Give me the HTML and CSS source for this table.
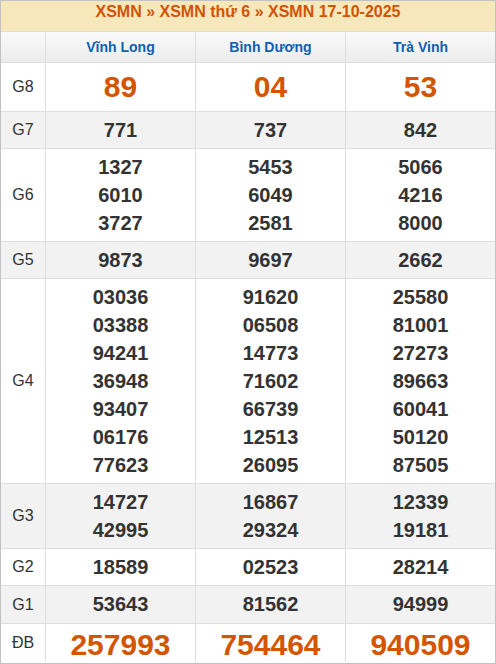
FILE: index.html
```html
<!DOCTYPE html>
<html lang="vi">
<head>
<meta charset="utf-8">
<title>XSMN 17-10-2025</title>
<link rel="stylesheet" href="styles.css">
</head>
<body>
<div class="box">
  <div class="title"><span>XSMN</span> » <span>XSMN thứ 6</span> » <span>XSMN 17-10-2025</span></div>
  <div class="grid">
    <div class="row head">
      <div class="lbl"></div>
      <div class="prov">Vĩnh Long</div>
      <div class="prov">Bình Dương</div>
      <div class="prov">Trà Vinh</div>
    </div>
    <div class="row g8">
      <div class="lbl">G8</div>
      <div class="cell"><span>89</span></div>
      <div class="cell"><span>04</span></div>
      <div class="cell"><span>53</span></div>
    </div>
    <div class="row alt">
      <div class="lbl">G7</div>
      <div class="cell"><span>771</span></div>
      <div class="cell"><span>737</span></div>
      <div class="cell"><span>842</span></div>
    </div>
    <div class="row">
      <div class="lbl">G6</div>
      <div class="cell"><span>1327</span><span>6010</span><span>3727</span></div>
      <div class="cell"><span>5453</span><span>6049</span><span>2581</span></div>
      <div class="cell"><span>5066</span><span>4216</span><span>8000</span></div>
    </div>
    <div class="row alt">
      <div class="lbl">G5</div>
      <div class="cell"><span>9873</span></div>
      <div class="cell"><span>9697</span></div>
      <div class="cell"><span>2662</span></div>
    </div>
    <div class="row">
      <div class="lbl">G4</div>
      <div class="cell"><span>03036</span><span>03388</span><span>94241</span><span>36948</span><span>93407</span><span>06176</span><span>77623</span></div>
      <div class="cell"><span>91620</span><span>06508</span><span>14773</span><span>71602</span><span>66739</span><span>12513</span><span>26095</span></div>
      <div class="cell"><span>25580</span><span>81001</span><span>27273</span><span>89663</span><span>60041</span><span>50120</span><span>87505</span></div>
    </div>
    <div class="row alt">
      <div class="lbl">G3</div>
      <div class="cell"><span>14727</span><span>42995</span></div>
      <div class="cell"><span>16867</span><span>29324</span></div>
      <div class="cell"><span>12339</span><span>19181</span></div>
    </div>
    <div class="row">
      <div class="lbl">G2</div>
      <div class="cell"><span>18589</span></div>
      <div class="cell"><span>02523</span></div>
      <div class="cell"><span>28214</span></div>
    </div>
    <div class="row alt g1">
      <div class="lbl">G1</div>
      <div class="cell"><span>53643</span></div>
      <div class="cell"><span>81562</span></div>
      <div class="cell"><span>94999</span></div>
    </div>
    <div class="row db">
      <div class="lbl">ĐB</div>
      <div class="cell"><span>257993</span></div>
      <div class="cell"><span>754464</span></div>
      <div class="cell"><span>940509</span></div>
    </div>
  </div>
</div>
</body>
</html>
```
FILE: styles.css
```css
html, body {
  margin: 0;
  padding: 0;
  background: #ffffff;
}
body {
  font-family: "Liberation Sans", Arial, sans-serif;
  color: #333333;
}
.box {
  width: 496px;
  height: 664px;
  box-sizing: border-box;
  border: 1px solid #c2c2c2;
  overflow: hidden;
}
.title {
  height: 30px;
  box-sizing: border-box;
  padding-bottom: 8px;
  line-height: 22px;
  background: #f7e8bb;
  color: #d25306;
  font-size: 16px;
  font-weight: bold;
  text-align: center;
  white-space: nowrap;
}
.grid {
  display: grid;
  grid-template-columns: 44px 149px 149px 149px;
  gap: 1px;
  background: #dedede;
  border-top: 1px solid #dedede;
}
.row {
  display: contents;
}
.row > div {
  background: #ffffff;
}
.row.alt > div {
  background: #f2f2f2;
}
.row.head > div {
  background: linear-gradient(#fafafa, #ececec);
  height: 30px;
  line-height: 30px;
}
.prov {
  text-align: center;
  color: #0f5fb3;
  font-size: 14px;
  font-weight: bold;
}
.lbl {
  display: flex;
  align-items: center;
  justify-content: center;
  font-size: 16px;
  color: #333333;
}
.cell {
  display: flex;
  flex-direction: column;
  align-items: center;
  padding: 4px 0;
  font-size: 20px;
  line-height: 28px;
  font-weight: bold;
  color: #333333;
}
.g8 .cell {
  font-size: 30px;
  line-height: 40px;
  color: #d45500;
}
.g1 .cell {
  padding-bottom: 5px;
}
.db .cell {
  font-size: 30px;
  line-height: 30px;
  padding: 6px 0 2px;
  color: #d45500;
}
```
